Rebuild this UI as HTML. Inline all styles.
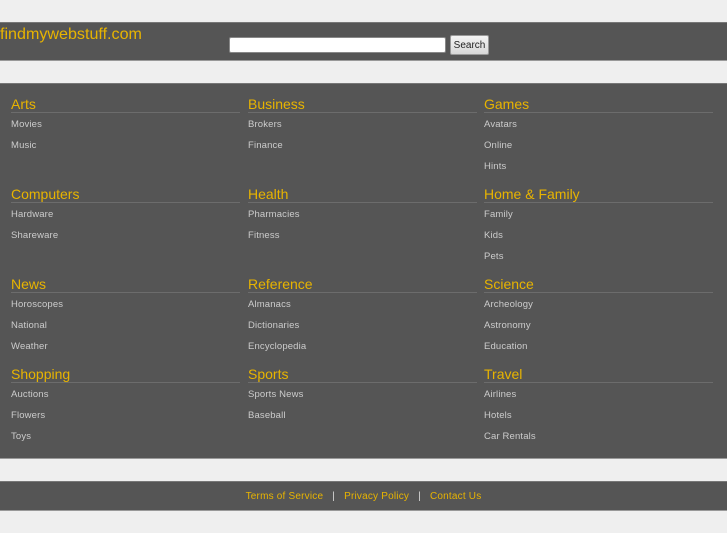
<!DOCTYPE html>
<html><head><style>
*{margin:0;padding:0;box-sizing:border-box}
body{width:727px;height:545px;background:#fff;font-family:"Liberation Sans",sans-serif;position:relative;overflow:hidden}
.bar{position:absolute;left:0;width:727px}
.l{background:#efefef}
.d{background:#555;border-top:1px solid #777;border-bottom:1px solid #999}
.logo{position:absolute;left:0;top:25px;color:#e8b400;font-size:16.1px}
.inp{position:absolute;left:229px;top:37px;width:217px;height:16px;background:#fff;border:1px solid #888;border-radius:2px}
.btn{position:absolute;left:450px;top:35px;width:39px;height:20px;background:linear-gradient(#f4f4f4,#d8d8d8);border:1px solid #999;border-radius:2px;font-size:10px;color:#222;text-align:center;line-height:20px}
.cat{position:absolute;width:229px}
.cat h2{font-weight:normal;font-size:14px;color:#e8b400;height:17px;line-height:17px;border-bottom:1px solid #6c6c6c;margin-top:-8px;margin-bottom:1px}
.cat a{display:block;color:#ccc;font-size:9.5px;letter-spacing:0.15px;text-decoration:none;height:21px;line-height:21px}
.foot{position:absolute;top:491px;left:0;width:727px;text-align:center;font-size:10px;letter-spacing:0.2px;color:#e8b400}
.foot span{color:#ddd;margin:0 9px}
</style></head><body>
<div class="bar l" style="top:0;height:533px"></div>
<div class="bar d" style="top:22px;height:39px"></div>
<div class="logo">findmywebstuff.com</div>
<div class="inp"></div><div class="btn">Search</div>
<div class="bar d" style="top:83px;height:376px"></div>
<div class="bar d" style="top:481px;height:30px"></div>
<div class="foot">Terms of Service<span>|</span>Privacy Policy<span>|</span>Contact Us</div>

<div class="cat" style="left:11px;top:104px"><h2>Arts</h2><a>Movies</a><a>Music</a></div>
<div class="cat" style="left:248px;top:104px"><h2>Business</h2><a>Brokers</a><a>Finance</a></div>
<div class="cat" style="left:484px;top:104px"><h2>Games</h2><a>Avatars</a><a>Online</a><a>Hints</a></div>
<div class="cat" style="left:11px;top:194px"><h2>Computers</h2><a>Hardware</a><a>Shareware</a></div>
<div class="cat" style="left:248px;top:194px"><h2>Health</h2><a>Pharmacies</a><a>Fitness</a></div>
<div class="cat" style="left:484px;top:194px"><h2>Home &amp; Family</h2><a>Family</a><a>Kids</a><a>Pets</a></div>
<div class="cat" style="left:11px;top:284px"><h2>News</h2><a>Horoscopes</a><a>National</a><a>Weather</a></div>
<div class="cat" style="left:248px;top:284px"><h2>Reference</h2><a>Almanacs</a><a>Dictionaries</a><a>Encyclopedia</a></div>
<div class="cat" style="left:484px;top:284px"><h2>Science</h2><a>Archeology</a><a>Astronomy</a><a>Education</a></div>
<div class="cat" style="left:11px;top:374px"><h2>Shopping</h2><a>Auctions</a><a>Flowers</a><a>Toys</a></div>
<div class="cat" style="left:248px;top:374px"><h2>Sports</h2><a>Sports News</a><a>Baseball</a></div>
<div class="cat" style="left:484px;top:374px"><h2>Travel</h2><a>Airlines</a><a>Hotels</a><a>Car Rentals</a></div>
</body></html>
